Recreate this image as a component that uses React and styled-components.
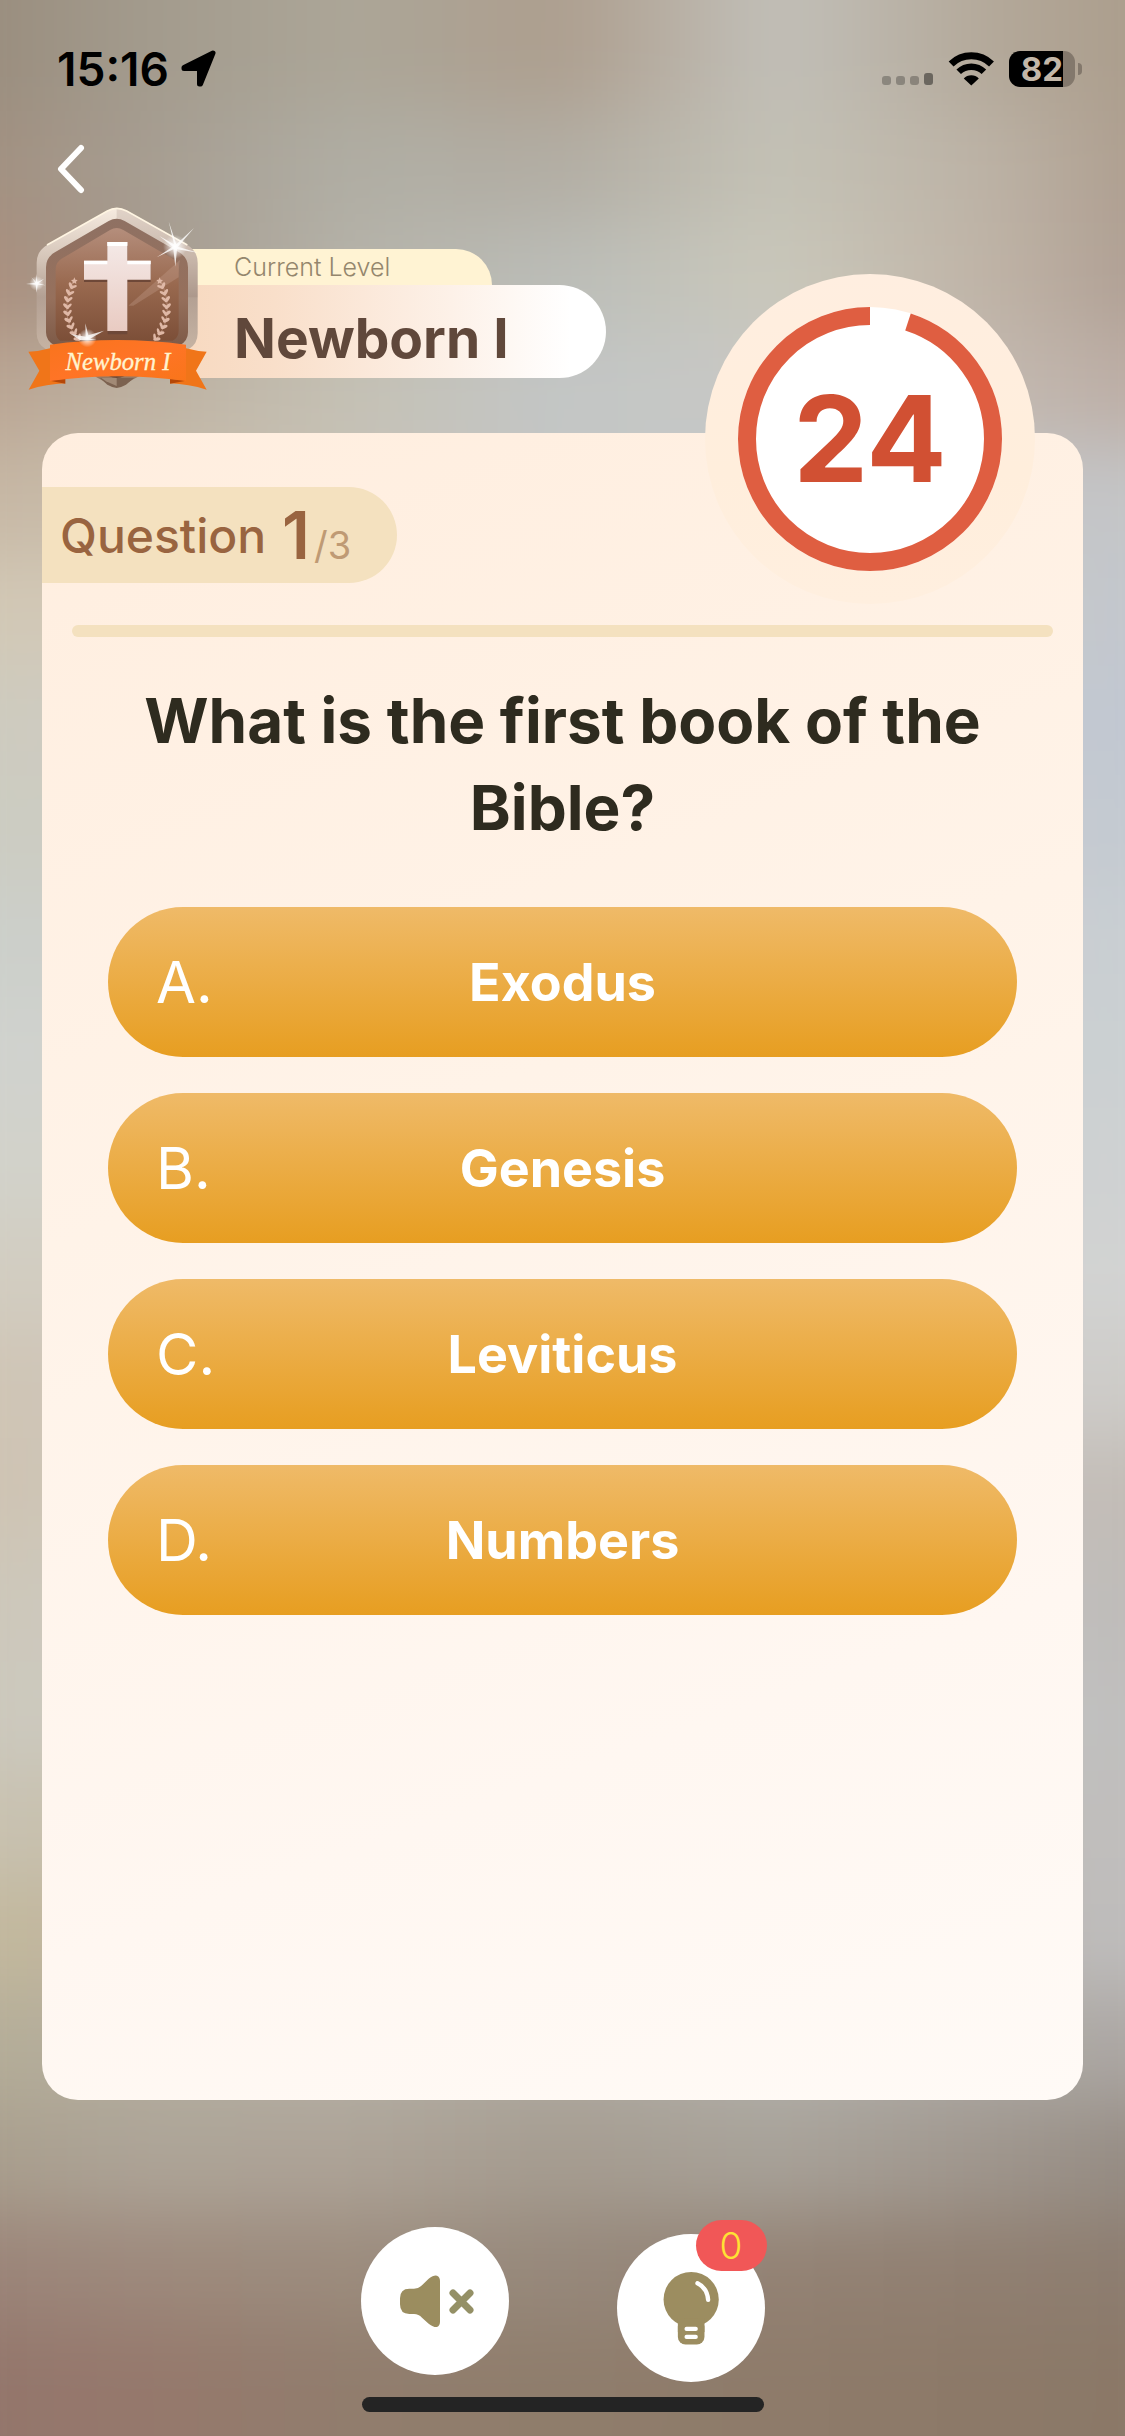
import React, { useState } from 'react';
import styled, { createGlobalStyle } from 'styled-components';

const question = {
    number: 1,
    total: 3,
    text: 'What is the first book of the Bible?',
    options: ['Exodus', 'Genesis', 'Leviticus', 'Numbers'],
};

const letters = ['A', 'B', 'C', 'D'];

// Colours of the blurred backdrop, one list per row, left to right
const backdropRows = [
    ['#968878', '#a29a8c', '#aca698', '#ad9e8e', '#c2c0b9', '#b3a899', '#a89987'],
    ['#968878', '#a29a8c', '#aca698', '#ad9e8e', '#c2c0b9', '#b3a899', '#a89987'],
    ['#a08b7a', '#a69c90', '#b0aea4', '#b2ada3', '#c4c2b6', '#bcb2a5', '#a89686'],
    ['#ad8b78', '#a4988b', '#b6b3a9', '#bbbdb8', '#cac8bb', '#bfb3a6', '#a9978c'],
    ['#b8a08d', '#bdb0a0', '#c5c1b4', '#c3c6c6', '#c8c8c4', '#c3b9b0', '#b9a8a0'],
    ['#c6b5a1', '#c9c0b0', '#c4c6c6', '#c4c6c8', '#c4c5c6'],
    ['#d3c8b4', '#cccabf', '#c2c7cf'],
    ['#cecbbd', '#cccccc', '#c0c7d2'],
    ['#ccccc0', '#cccccc', '#c3cad2'],
    ['#ccd0ca', '#cccccc', '#c9cfd3'],
    ['#d1d3ce', '#cccccc', '#cbd1d3'],
    ['#d3d3ca', '#cccccc', '#cfd2d3'],
    ['#d3cdbf', '#cccccc', '#d3d4d3'],
    ['#d0c4b2', '#cccccc', '#ceccc8'],
    ['#cfc3b0', '#cccccc', '#c1bab3'],
    ['#cdc7b8', '#cccccc', '#bdbab7'],
    ['#ccc8bb', '#cccccc', '#bebdbc'],
    ['#cac3b1', '#c0b8a8', '#c0bfc0'],
    ['#c4b99d', '#b8b0a0', '#bfbec0'],
    ['#b5ad95', '#b3ad9e', '#b4b0a5', '#aea9a0', '#b2b0aa', '#aca8a3', '#aca7a4'],
    ['#a79c89', '#ada497', '#ada397', '#a59c90', '#a8a299', '#9f968d', '#918880'],
    ['#9a8277', '#9d897c', '#9c8c7d', '#96887b', '#938274', '#907f71', '#8b7c6f'],
    ['#92756b', '#96786c', '#917d6d', '#8f7d6c', '#8e7b6a', '#8c7968', '#8a7867'],
    ['#90736a', '#96786c', '#907c6c', '#8e7c6a', '#8e7b69', '#8c7867', '#8a7766'],
];

// Leaves of one laurel branch, following an arc around the cross
const leaves = [-22, -14, -6, 2, 10, 18, 26, 34, 42].map((deg) => {
    const rad = (deg * Math.PI) / 180;
    return { deg, x: 350 - 148 * Math.cos(rad), y: 350 + 148 * Math.sin(rad) };
});

function Laurel() {
    return (
        <g fill="#dfb8a6">
            <path d="M223 260l3 7 7 1-5 5 1 7-6-4-6 4 1-7-5-5 7-1z" />
            <path
                d="M212 288Q190 350 208 402Q218 430 238 452"
                fill="none"
                stroke="#c79b88"
                strokeWidth="2"
            />
            {leaves.map(({ deg, x, y }) => (
                <g key={deg} transform={`translate(${x} ${y}) rotate(${-deg})`}>
                    <ellipse cx="-9" cy="-3" rx="11" ry="5" transform="rotate(48)" />
                    <ellipse cx="10" cy="-3" rx="10" ry="4" transform="rotate(-42)" />
                </g>
            ))}
        </g>
    );
}

function LevelBadge() {
    return (
        <BadgeSvg viewBox="75 40 561 570" role="img" aria-label="Newborn I badge">
            <defs>
                <linearGradient id="rim" x1="0" y1="0" x2="0" y2="1">
                    <stop offset="0" stopColor="#f6ebe0" />
                    <stop offset="0.3" stopColor="#d3c3b6" />
                    <stop offset="0.5" stopColor="#b3a093" />
                    <stop offset="0.8" stopColor="#c6b3a3" />
                    <stop offset="1" stopColor="#86664f" />
                </linearGradient>
                <linearGradient id="bevel" x1="0" y1="0" x2="0" y2="1">
                    <stop offset="0" stopColor="#8f7163" />
                    <stop offset="0.5" stopColor="#96705c" />
                    <stop offset="1" stopColor="#6d4b39" />
                </linearGradient>
                <linearGradient id="plate" x1="0" y1="0" x2="0" y2="1">
                    <stop offset="0" stopColor="#b58e7c" />
                    <stop offset="0.5" stopColor="#99694f" />
                    <stop offset="1" stopColor="#7c4f38" />
                </linearGradient>
                <linearGradient id="cross" x1="0" y1="0" x2="0" y2="1">
                    <stop offset="0" stopColor="#f4e9e7" />
                    <stop offset="1" stopColor="#e9cbc2" />
                </linearGradient>
                <linearGradient id="ribbon" x1="0" y1="0" x2="1" y2="1">
                    <stop offset="0" stopColor="#f9741c" />
                    <stop offset="0.5" stopColor="#ff7426" />
                    <stop offset="1" stopColor="#f9751a" />
                </linearGradient>
                <radialGradient id="glow">
                    <stop offset="0" stopColor="#fff" />
                    <stop offset="0.4" stopColor="#fff" stopOpacity="0.6" />
                    <stop offset="1" stopColor="#fff" stopOpacity="0" />
                </radialGradient>
            </defs>
            <path
                d="M350 52Q364 52 380 61L562 163Q593 182 593 216V428Q593 460 566 476L378 578Q350 592 322 578L138 476Q110 460 110 428V216Q110 182 141 163L322 61Q336 52 350 52Z"
                fill="url(#rim)"
            />
            <path d="M350 52Q364 52 380 61L562 163Q593 182 593 216V320H563L350 84Z" fill="#8f7a6c" opacity="0.2" />
            <path d="M141 163L322 61Q350 45 380 61L562 163" fill="none" stroke="#fff5e2" strokeWidth="5" />
            <path
                d="M350 84Q362 84 374 91L536 184Q564 200 564 230V425Q564 450 540 464L374 556Q350 568 326 556L163 464Q138 450 138 425V230Q138 200 166 184L326 91Q338 84 350 84Z"
                fill="url(#bevel)"
            />
            <path
                d="M350 112Q360 112 370 118L516 203Q536 214 536 236V420Q536 440 518 450L180 450Q167 440 167 420V236Q167 214 187 203L330 118Q340 112 350 112Z"
                fill="url(#plate)"
            />
            <path d="M385 345L540 208Q536 225 536 260L400 345Z" fill="#c9a595" opacity="0.3" />
            <path d="M350 592Q336 590 322 582L300 562H402L378 582Q364 590 350 592Z" fill="#7c6250" />
            <path d="M350 562V586L318 572L304 562Z" fill="#a28a76" />
            <Laurel />
            <g transform="translate(702 0) scale(-1 1)">
                <Laurel />
            </g>
            <path d="M323 163H382V220H452V274H382V431H323V274H252V220H323Z" fill="#6e4838" />
            <path d="M322 154H382V210H452V267H382V421H322V267H252V210H322Z" fill="url(#cross)" />
            <path d="M322 154H382V166H322ZM252 210H322V221H252ZM382 210H452V221H382Z" fill="#fff" />
            <path d="M85 483Q120 482 150 473V560L196 578Q140 580 86 597L118 540Z" fill="#f07519" />
            <path d="M620 483Q590 482 558 473V560L510 578Q566 580 620 597L588 540Z" fill="#f07519" />
            <path d="M150 570Q172 564 196 565V579Q172 574 150 570Z" fill="#b54708" />
            <path d="M558 570Q534 564 510 565V579Q534 574 558 570Z" fill="#b54708" />
            <path d="M150 462Q352 434 558 462V571Q352 543 150 571Z" fill="url(#ribbon)" />
            <BadgeLabel x="354" y="539" textAnchor="middle">
                Newborn I
            </BadgeLabel>
            <circle cx="525" cy="168" r="36" fill="url(#glow)" />
            <circle cx="110" cy="278" r="22" fill="url(#glow)" />
            <circle cx="262" cy="442" r="28" fill="url(#glow)" />
            <g fill="#fff" opacity="0.8">
                <path d="M506 92L529 161L582 112L534 168L594 186L531 176L526 228L520 176L470 200L518 168L478 136L522 161Z" />
                <path d="M108 250L112 274L133 264L115 278L136 284L113 282L110 306L107 282L78 280L106 276L94 260L108 274Z" />
                <path d="M256 398L265 434L312 420L270 444L290 448H240L212 430L257 438Z" />
            </g>
        </BadgeSvg>
    );
}

function StatusBar() {
    return (
        <StatusRow>
            <StatusGroup $gap={12}>
                <Clock>15:16</Clock>
                <svg width="36" height="38" viewBox="0 0 36 38" aria-hidden="true">
                    <path
                        d="M32 3L3 17.5V18.5H18.500V34H19.500Z"
                        stroke="#000"
                        strokeWidth="5"
                        strokeLinejoin="round"
                    />
                </svg>
            </StatusGroup>
            <StatusGroup $gap={14}>
                <svg width="52" height="34" viewBox="0 0 52 34" aria-hidden="true">
                    <g fill="#000" opacity="0.25">
                        <rect x="0" y="24" width="9" height="9" rx="3" />
                        <rect x="14" y="24" width="9" height="9" rx="3" />
                        <rect x="28" y="24" width="9" height="9" rx="3" />
                    </g>
                    <rect x="42" y="21" width="9" height="12" rx="3" opacity="0.42" />
                </svg>
                <svg width="47" height="34" viewBox="0 0 47 34" aria-hidden="true">
                    <g fill="none" stroke="#000" strokeWidth="7">
                        <path d="M3.100 11.900A29 29 0 0 1 43.500 11.900" />
                        <path d="M10.700 19.800A18 18 0 0 1 35.900 19.800" strokeWidth="6.500" />
                    </g>
                    <path d="M15.800 26.500A10.500 10.500 0 0 1 30.800 26.500L23.300 33.500Z" />
                </svg>
                <BatteryWrap>
                    <Battery>82</Battery>
                    <BatteryTip />
                </BatteryWrap>
            </StatusGroup>
        </StatusRow>
    );
}

function Timer({ seconds, elapsed }) {
    const length = 2 * Math.PI * 123;
    const used = length * elapsed;

    return (
        <TimerDisc role="timer">
            <TimerRing viewBox="0 0 330 330" aria-hidden="true">
                <circle cx="165" cy="165" r="132" fill="#fff" />
                <circle
                    cx="165"
                    cy="165"
                    r="123"
                    fill="none"
                    stroke="#df5e41"
                    strokeWidth="18"
                    strokeDasharray={`0 ${used} ${length - used}`}
                    transform="rotate(-90 165 165)"
                />
            </TimerRing>
            <TimerText>{seconds}</TimerText>
        </TimerDisc>
    );
}

function App() {
    const [selected, setSelected] = useState(null);
    const [muted, setMuted] = useState(true);

    return (
        <Screen>
            <GlobalStyle />
            <Backdrop aria-hidden="true">
                <BackdropBlur>
                    {backdropRows.map((colors, i) => (
                        <BackdropRow key={i} $colors={colors.join(', ')} />
                    ))}
                </BackdropBlur>
            </Backdrop>

            <StatusBar />

            <NavRow>
                <BackButton type="button" aria-label="Back">
                    <svg width="28" height="50" viewBox="0 0 28 50">
                        <path
                            d="M24 4L4 25L24 46"
                            fill="none"
                            stroke="#fff"
                            strokeWidth="6"
                            strokeLinecap="round"
                            strokeLinejoin="round"
                        />
                    </svg>
                </BackButton>
            </NavRow>

            <LevelRow>
                <LevelBadge />
                <LevelInfo>
                    <LevelCaption>Current Level</LevelCaption>
                    <LevelName>Newborn I</LevelName>
                </LevelInfo>
            </LevelRow>

            <Card>
                <Timer seconds={24} elapsed={0.05} />
                <QuestionTag>
                    <span>Question</span>
                    <TagCount>
                        {question.number}
                        <TagTotal>/{question.total}</TagTotal>
                    </TagCount>
                </QuestionTag>
                <Divider />
                <QuestionText>{question.text}</QuestionText>
                <Options>
                    {question.options.map((option, i) => (
                        <Option
                            key={option}
                            type="button"
                            aria-pressed={selected === i}
                            onClick={() => setSelected(i)}
                        >
                            <OptionLetter>{letters[i]}.</OptionLetter>
                            <OptionText>{option}</OptionText>
                        </Option>
                    ))}
                </Options>
            </Card>

            <Footer>
                <Actions>
                    <RoundButton type="button" aria-label="Sound" aria-pressed={muted} onClick={() => setMuted(!muted)}>
                        <svg viewBox="65 114 444 444">
                            <path
                                d="M182 328Q182 299 210 299H224Q238 299 248 289L268 269Q284 257 293 260Q302 264 302 276V398Q302 410 293 414Q284 416 268 404L248 386Q238 375 224 375H210Q182 375 182 346Z"
                                fill="#9b8d5f"
                            />
                            {muted && (
                                <path
                                    d="M341 312L392 363M392 312L341 363"
                                    stroke="#949066"
                                    strokeWidth="21"
                                    strokeLinecap="round"
                                />
                            )}
                        </svg>
                    </RoundButton>
                    <HintBox>
                        <RoundButton type="button" aria-label="Hint">
                            <svg viewBox="834 130 445 445">
                                <circle cx="1057" cy="327" r="83" fill="#9c8d60" />
                                <rect x="1017" y="385" width="80" height="77" rx="23" fill="#9c8d60" />
                                <rect x="1017" y="385" width="80" height="40" fill="#9c8d60" />
                                <rect x="1037" y="409" width="40" height="13" rx="6" fill="#fff" />
                                <rect x="1037" y="433" width="40" height="13" rx="6" fill="#fff" />
                                <path
                                    d="M1076 278Q1105 292 1108 328"
                                    fill="none"
                                    stroke="#fff"
                                    strokeWidth="13"
                                    strokeLinecap="round"
                                />
                            </svg>
                        </RoundButton>
                        <HintCount>0</HintCount>
                    </HintBox>
                </Actions>
                <HomeIndicator />
            </Footer>
        </Screen>
    );
}

const GlobalStyle = createGlobalStyle`
    * {
        box-sizing: border-box;
    }
    body {
        margin: 0;
        background: #b5ada0;
        font-family: Inter, "Liberation Sans", sans-serif;
    }
    button {
        font-family: inherit;
        border: none;
        padding: 0;
        cursor: pointer;
    }
    svg {
        display: block;
    }
`;

const Screen = styled.div`
    position: relative;
    isolation: isolate;
    display: flex;
    flex-direction: column;
    min-height: 100vh;
`;

const Backdrop = styled.div`
    position: absolute;
    inset: 0;
    z-index: -1;
    overflow: hidden;
`;

const BackdropBlur = styled.div`
    position: absolute;
    inset: -110px -80px;
    display: flex;
    flex-direction: column;
    filter: blur(36px);
`;

const BackdropRow = styled.div`
    flex: 1;
    background: linear-gradient(to right, ${(props) => props.$colors});
`;

const StatusRow = styled.header`
    display: flex;
    align-items: center;
    justify-content: space-between;
    height: 138px;
    padding: 0 43px 0 57px;
`;

const StatusGroup = styled.div`
    display: flex;
    align-items: center;
    gap: ${(props) => props.$gap}px;
`;

const Clock = styled.time`
    font-size: 46px;
    font-weight: 600;
    color: #000;
`;

const BatteryWrap = styled.div`
    display: flex;
    align-items: center;
    gap: 3px;
`;

const Battery = styled.div`
    width: 66px;
    height: 36px;
    border-radius: 11px;
    background: linear-gradient(to right, #000 82%, #83786c 82%);
    color: #c3b7a8;
    font-size: 33px;
    font-weight: 700;
    line-height: 36px;
    text-align: center;
`;

const BatteryTip = styled.div`
    width: 4px;
    height: 12px;
    border-radius: 0 4px 4px 0;
    background: #83786c;
`;

const NavRow = styled.nav`
    display: flex;
    align-items: center;
    height: 62px;
    padding: 0 57px;
`;

const BackButton = styled.button`
    background: none;
`;

const LevelRow = styled.section`
    display: flex;
    align-items: flex-start;
    padding: 4px 25px 0;
`;

const BadgeSvg = styled.svg`
    position: relative;
    z-index: 1;
    flex: none;
    width: 187px;
    height: 190px;
`;

const BadgeLabel = styled.text`
    font-family: "Liberation Serif", serif;
    font-size: 74px;
    font-style: italic;
    fill: #fff3cf;
    stroke: #fff3cf;
    stroke-width: 1px;
`;

const LevelInfo = styled.div`
    display: flex;
    flex-direction: column;
    align-items: flex-start;
    margin: 45px 0 0 -48px;
`;

const LevelCaption = styled.div`
    width: 328px;
    height: 36px;
    padding-left: 70px;
    border-radius: 0 36px 0 0;
    background: #fff3d3;
    color: #94866d;
    font-size: 25px;
    font-weight: 300;
    line-height: 36px;
`;

const LevelName = styled.div`
    width: 442px;
    height: 93px;
    padding-left: 70px;
    border-radius: 0 47px 47px 0;
    background: linear-gradient(to right, #f7d8be, #f9dfca 25%, #fdf1e8 65%, #ffffff 92%);
    color: #60483b;
    font-size: 55px;
    font-weight: 700;
    line-height: 106px;
`;

const Card = styled.main`
    position: relative;
    flex: 1;
    margin: 39px 42px 0;
    padding: 54px 0;
    border-radius: 36px;
    background: linear-gradient(160deg, #ffeedf, #fff3e8 40%, #fff7f1 75%, #fffaf6);
`;

const TimerDisc = styled.div`
    position: absolute;
    top: -159px;
    right: 48px;
    display: flex;
    align-items: center;
    justify-content: center;
    width: 330px;
    height: 330px;
    border-radius: 50%;
    background: linear-gradient(#ffeee0, #ffeedc 60%, #ffefdf);
`;

const TimerRing = styled.svg`
    position: absolute;
    inset: 0;
`;

const TimerText = styled.span`
    position: relative;
    color: #d15033;
    font-size: 119px;
    font-weight: 700;
    line-height: 1;
`;

const QuestionTag = styled.div`
    display: flex;
    align-items: center;
    gap: 16px;
    width: 355px;
    height: 96px;
    padding-left: 18px;
    border-radius: 0 48px 48px 0;
    background: #f4e1bf;
    color: #996440;
    font-size: 48px;
    font-weight: 500;
`;

const TagCount = styled.span`
    display: flex;
    align-items: baseline;
    gap: 4px;
    font-size: 66px;
    font-weight: 600;
`;

const TagTotal = styled.span`
    color: #bf9a74;
    font-size: 38px;
    font-weight: 400;
`;

const Divider = styled.hr`
    height: 12px;
    margin: 42px 30px 0;
    border: none;
    border-radius: 6px;
    background: #f4e1bf;
`;

const QuestionText = styled.h1`
    margin: 40px 66px 56px;
    color: #2e2b1f;
    font-size: 62px;
    font-weight: 700;
    line-height: 87px;
    text-align: center;
`;

const Options = styled.div`
    display: grid;
    gap: 36px;
    margin: 0 66px;
`;

const Option = styled.button`
    display: grid;
    grid-template-columns: 1fr auto 1fr;
    align-items: center;
    height: 150px;
    padding: 0 48px;
    border-radius: 75px;
    background: linear-gradient(#efba68, #e79e21);
    color: #fff;
`;

const OptionLetter = styled.span`
    font-size: 58px;
    font-weight: 400;
    text-align: left;
`;

const OptionText = styled.span`
    font-size: 52px;
    font-weight: 700;
`;

const Footer = styled.footer`
    display: flex;
    flex-direction: column;
    align-items: center;
    gap: 15px;
    padding: 120px 0 24px;
`;

const Actions = styled.div`
    display: flex;
    align-items: center;
    gap: 108px;
`;

const RoundButton = styled.button`
    display: block;
    width: 148px;
    height: 148px;
    border-radius: 50%;
    background: #fff;
`;

const HintBox = styled.div`
    position: relative;
    padding-top: 14px;
`;

const HintCount = styled.span`
    position: absolute;
    top: 0;
    right: -2px;
    width: 71px;
    height: 51px;
    border-radius: 26px;
    background: #f15757;
    color: #ffe234;
    font-size: 37px;
    font-weight: 300;
    line-height: 51px;
    text-align: center;
`;

const HomeIndicator = styled.div`
    width: 402px;
    height: 15px;
    border-radius: 8px;
    background: #242424;
`;

export default App;
